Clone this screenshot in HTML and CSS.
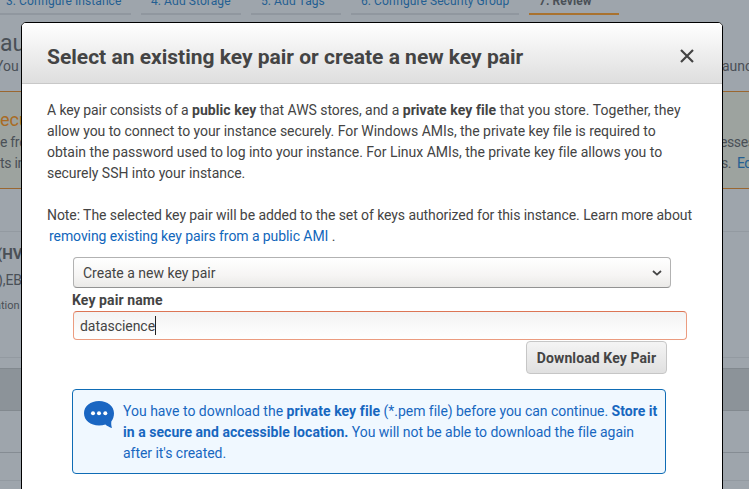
FILE: index.html
```
<!DOCTYPE html>
<html lang="en">
<head>
<meta charset="utf-8">
<title>Select a key pair</title>
<link rel="stylesheet" href="styles.css">
</head>
<body>
<div class="page">
  <nav class="tabs">
    <span class="tab tab-first">3. Configure Instance</span>
    <span class="tab tab-storage">4. Add Storage</span>
    <span class="tab tab-tags">5. Add Tags</span>
    <span class="tab tab-group">6. Configure Security Group</span>
    <span class="tab tab-active">7. Review</span>
  </nav>
  <div class="intro">
    <div class="intro-title">au</div>
    <div class="row intro-text"><span class="cut-you">You c</span><span>aunch</span></div>
  </div>
  <div class="warning">
    <div class="warning-title">ecu</div>
    <div class="row"><span class="tight">e fro</span><span class="cut-esses">esses</span></div>
    <div class="row"><span class="tight">ts in</span><span class="cut-end">s.&nbsp; <span class="page-link">Ed</span></span></div>
  </div>
  <div class="ami">
    <div class="ami-name">(HV</div>
    <div class="ami-desc">),EB</div>
    <div class="ami-meta">ation</div>
  </div>
  <div class="band"></div>
  <div class="band-row"></div>
  <div class="band-end"></div>
</div>

<section class="modal">
  <header class="modal-header">
    <h1>Select an existing key pair or create a new key pair</h1>
    <svg class="close" viewBox="0 0 14 14"><path d="M1 1L13 13M13 1L1 13"/></svg>
  </header>
  <div class="modal-body">
    <p><span class="snug-3">A key pair consists of a </span><b class="loose">public key</b><span class="snug-1"> that AWS stores, and a </span><b class="loose">private key file</b><span class="loose-1"> that you store. Together, they</span><br><span class="snug-1">allow you to connect to your instance securely. For Windows AMIs, the private key file is required to</span><br><span class="snug-0">obtain the password used to log into your instance. For Linux AMIs, the private key file allows you to</span><br><span class="snug-1">securely SSH into your instance.</span></p>
    <p><span class="snug-2">Note: The selected key pair will be added to the set of keys authorized for this instance. Learn more about</span><br><span class="snug-2"><a class="doc-link">removing existing key pairs from a public AMI</a> .</span></p>
    <div class="form">
      <div class="select"><span>Create a new key pair</span><svg class="chevron" viewBox="0 0 10 6"><path d="M1 1L5 4.6L9 1"/></svg></div>
      <div class="label">Key pair name</div>
      <div class="input"><span>datascience</span><i class="caret"></i></div>
      <div class="button">Download Key Pair</div>
      <div class="notice">
        <svg class="bubble" viewBox="0 0 30 27"><path d="M15 0C6.500 0 0 5.200 0 12.200S6.500 24.500 15 24.500C17.400 24.500 19.500 24.200 21.400 23.500C23.300 25.200 25.600 26.300 28 27C27.300 25 27.100 23.300 27.300 20.500C29 18.200 30 15.400 30 12.200C30 5.200 23.500 0 15 0Z"/><circle cx="9" cy="12.300" r="2"/><circle cx="15" cy="12.300" r="2"/><circle cx="21.300" cy="12.300" r="2"/></svg>
        <div>You have to download the <b class="loose">private key file</b><span class="snug-1"> (*.pem file) before you can continue. </span><b>Store it</b><br><b class="loose-1">in a secure and accessible location.</b><span class="snug-1"> You will not be able to download the file again</span><br><span class="snug-1">after it's created.</span></div>
      </div>
    </div>
  </div>
</section>
</body>
</html>
```
FILE: styles.css
```
* { box-sizing: border-box; }
html, body { height: 100%; overflow: hidden; }
body {
  margin: 0;
  background: #9ea5ac;
  color: #444;
  font: 14px/21px Roboto, sans-serif;
  white-space: nowrap;
}
.page { height: 489px; overflow: hidden; color: #4a5057; }

.tabs { display: flex; gap: 10px; height: 15px; font-size: 12px; line-height: 14px; color: #245f92; letter-spacing: 0.08px; }
.tab { display: flex; flex: none; align-items: flex-end; height: 15px; padding: 0 0 5px 10px; border-bottom: 2px solid #90979f; }
.tab-first { width: 131px; padding-left: 6px; }
.tab-storage { width: 100px; }
.tab-tags { width: 90px; }
.tab-group { width: 168px; }
.tab-active { width: 90px; border-color: #a9722f; color: #4a5057; font-weight: bold; }

.row { display: grid; grid-template-columns: 722px 1fr; }
.intro { height: 76px; padding-top: 15px; }
.intro-title { height: 25px; font-size: 23px; line-height: 28px; }
.intro-text { line-height: 22px; }
.cut-you { margin-left: -5px; }
.cut-esses { margin-left: -2px; letter-spacing: -0.4px; }
.cut-end { margin-left: -1px; letter-spacing: -0.5px; }
.tight { letter-spacing: -0.3px; }
.warning { height: 98px; padding-top: 16px; border: solid #9a6730; border-width: 1px 0; background: #9da39f; }
.warning-title { height: 24px; font-size: 18px; line-height: 24px; color: #a96b24; }
.page-link { color: #245f92; }
.ami { height: 127px; margin-top: 42px; padding-top: 11px; border: solid #939aa1; border-width: 1px 0; }
.ami-name { height: 23px; margin-left: -3px; font-size: 15px; font-weight: bold; line-height: 22px; }
.ami-desc { margin-left: -2px; line-height: 28px; letter-spacing: -0.1px; }
.ami-meta { margin-left: -5px; font-size: 11px; line-height: 24px; }
.band { height: 43px; margin-top: 10px; border: solid #82898f; border-width: 1px 0; background: #8c9399; }
.band-row { height: 42px; border-bottom: 1px solid #858c93; }
.band-end { height: 28px; border-bottom: 1px solid #939aa1; }

.modal {
  position: absolute;
  top: 22px;
  left: 21px;
  width: 702px;
  height: 480px;
  border: 1px solid #000;
  border-radius: 5px;
  background: #fff;
  overflow: hidden;
}
.modal-header {
  display: flex;
  align-items: center;
  justify-content: space-between;
  height: 61px;
  padding: 7px 28px 0 25px;
  border-bottom: 1px solid #c8c8c8;
  background: linear-gradient(#fff, #dedede);
}
h1 { margin: 0; font-size: 21px; line-height: 28px; font-weight: bold; }
.close { width: 14px; height: 14px; margin-top: -1px; fill: none; stroke: #444; stroke-width: 2.200; }
.modal-body { padding: 16px 0 0 25px; }
p { margin: 0 0 21px; }
.snug-0 { letter-spacing: -0.02px; }
.snug-1 { letter-spacing: -0.04px; }
.snug-2 { letter-spacing: -0.077px; }
.snug-3 { letter-spacing: -0.11px; }
.loose { letter-spacing: 0.08px; }
.loose-1 { letter-spacing: 0.05px; }
.doc-link { margin-left: 2px; color: #1166bb; }
.form { display: flex; flex-direction: column; align-items: flex-start; margin-top: -11px; padding-left: 25px; }
.select {
  display: flex;
  align-items: center;
  justify-content: space-between;
  width: 598px;
  height: 31px;
  margin-left: 1px;
  padding: 1px 8px 0 9px;
  border: 1px solid #b2b2b2;
  border-bottom-color: #929292;
  border-radius: 4px;
  background: linear-gradient(#fff, #f6f5f4 60%, #eae9e7);
}
.chevron { width: 10px; height: 6px; margin-top: -1px; fill: none; stroke: #444; stroke-width: 1.800; }
.label { height: 23px; line-height: 24px; font-weight: bold; letter-spacing: 0.1px; }
.input {
  display: flex;
  align-items: center;
  width: 614px;
  height: 29px;
  margin-left: 1px;
  padding: 2px 0 0 6px;
  border: 1px solid #eb9c80;
  border-top-color: #dc7555;
  border-radius: 4px;
  background: linear-gradient(#f3f3f3, #fff);
  letter-spacing: -0.05px;
}
.caret { width: 1px; height: 19px; margin-top: -2px; background: #222; }
.button {
  width: 141px;
  height: 33px;
  margin: 1px 0 0 454px;
  border: 1px solid #c6c6c6;
  border-radius: 4px;
  background: linear-gradient(#f4f4f4, #e0e0e0);
  text-align: center;
  line-height: 32px;
  font-weight: bold;
  letter-spacing: 0.1px;
}
.notice {
  display: flex;
  width: 594px;
  height: 85px;
  margin-top: 15px;
  padding: 11px 0 0 11px;
  border: 1px solid #0f6cb5;
  border-radius: 4px;
  background: #f0f8ff;
  color: #1767bf;
}
.bubble { width: 30px; height: 27px; margin-right: 9px; fill: #1a66c2; }
.bubble circle { fill: #fff; }
```
